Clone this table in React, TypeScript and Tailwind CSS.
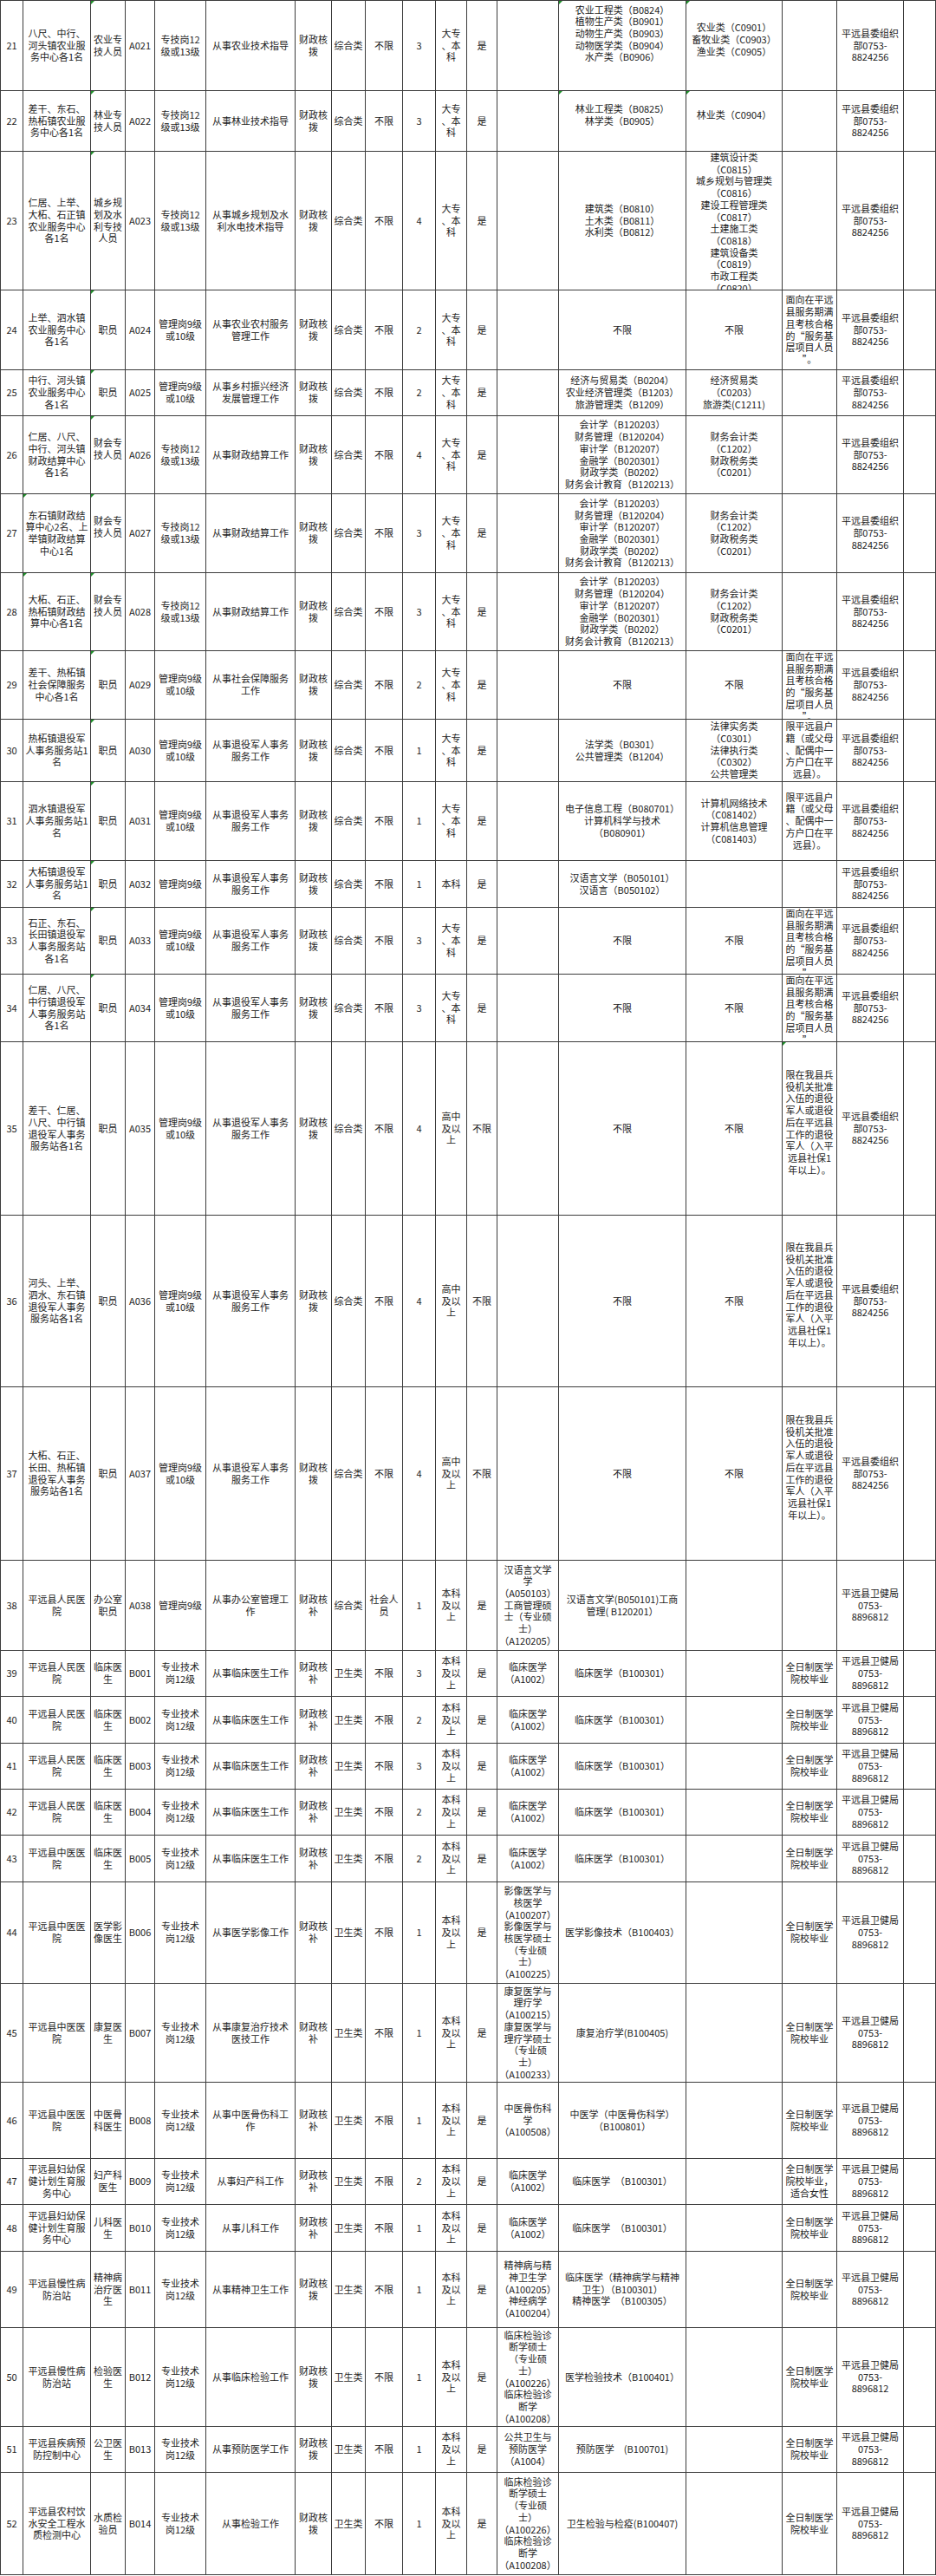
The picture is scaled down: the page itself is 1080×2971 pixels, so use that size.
import React from "react";

const COLS =
  "grid grid-cols-[26px_78px_40px_34px_59px_103px_42px_39px_43px_38px_36px_35px_71px_147px_111px_63px_77px_37px]";

const ORG = "平远县委组织|部0753-|8824256";
const HEALTH = "平远县卫健局|0753-|8896812";
const DZBK = "大专|、本|科";
const BKYS = "本科|及以|上";
const GZYS = "高中|及以|上";
const FUWU = "面向在平远|县服务期满|且考核合格|的“服务基|层项目人员|”。";
const HUJI = "限平远县户|籍（或父母|、配偶中一|方户口在平|远县）。";
const TUIYI =
  "限在我县兵|役机关批准|入伍的退役|军人或退役|后在平远县|工作的退役|军人（入平|远县社保1|年以上）。|";
const CAIKJ =
  "会计学（B120203）|财务管理（B120204）|审计学（B120207）|金融学（B020301）|财政学类（B0202）|财务会计教育（B120213）";
const CAIZK = "财务会计类|（C1202）|财政税务类|（C0201）";
const GL = "管理岗9级|或10级";
const ZJ = "专技岗12|级或13级";
const ZY = "专业技术|岗12级";
const BA = "财政核|拨";
const BU = "财政核|补";
const QRZ = "全日制医学|院校毕业";
const LC = "临床医学|（A1002）";
const TY = "从事退役军人事务|服务工作";
const JYZX = "临床检验诊|断学硕士|（专业硕|士）|（A100226）|临床检验诊|断学|（A100208）";

type Row = { h: string; c: string[]; m?: number[] };

const rows: Row[] = [
  { h: "h-[104px]", m: [2, 13, 14], c: ["21", "八尺、中行、|河头镇农业服|务中心各1名", "农业专|技人员", "A021", ZJ, "从事农业技术指导", BA, "综合类", "不限", "3", DZBK, "是", "", "农业工程类（B0824）|植物生产类（B0901）|动物生产类（B0903）|动物医学类（B0904）|水产类（B0906）||", "农业类（C0901）|畜牧业类（C0903）|渔业类（C0905）|", "", ORG, ""] },
  { h: "h-[70px]", m: [2, 13, 14], c: ["22", "差干、东石、|热柘镇农业服|务中心各1名", "林业专|技人员", "A022", ZJ, "从事林业技术指导", BA, "综合类", "不限", "3", DZBK, "是", "", "林业工程类（B0825）|林学类（B0905）|", "林业类（C0904）|", "", ORG, ""] },
  { h: "h-[160px]", m: [2], c: ["23", "仁居、上举、|大柘、石正镇|农业服务中心|各1名", "城乡规|划及水|利专技|人员", "A023", ZJ, "从事城乡规划及水|利水电技术指导", BA, "综合类", "不限", "4", DZBK, "是", "", "建筑类（B0810）|土木类（B0811）|水利类（B0812）", "建筑设计类|（C0815）|城乡规划与管理类|（C0816）|建设工程管理类|（C0817）|土建施工类|（C0818）|建筑设备类|（C0819）|市政工程类|（C0820）", "", ORG, ""] },
  { h: "h-[92px]", m: [2], c: ["24", "上举、泗水镇|农业服务中心|各1名", "职员", "A024", GL, "从事农业农村服务|管理工作", BA, "综合类", "不限", "2", DZBK, "是", "", "不限", "不限", FUWU, ORG, ""] },
  { h: "h-[53px]", m: [2], c: ["25", "中行、河头镇|农业服务中心|各1名", "职员", "A025", GL, "从事乡村振兴经济|发展管理工作", BA, "综合类", "不限", "2", DZBK, "是", "", "经济与贸易类（B0204）|农业经济管理类（B1203）|旅游管理类（B1209）", "经济贸易类|（C0203）|旅游类(C1211)", "", ORG, ""] },
  { h: "h-[90px]", m: [2], c: ["26", "仁居、八尺、|中行、河头镇|财政结算中心|各1名", "财会专|技人员|", "A026", ZJ, "从事财政结算工作", BA, "综合类", "不限", "4", DZBK, "是", "", CAIKJ, CAIZK, "", ORG, ""] },
  { h: "h-[91px]", m: [1, 2], c: ["27", "东石镇财政结|算中心2名、上|举镇财政结算|中心1名", "财会专|技人员|", "A027", ZJ, "从事财政结算工作", BA, "综合类", "不限", "3", DZBK, "是", "", CAIKJ, CAIZK, "", ORG, ""] },
  { h: "h-[90px]", m: [1, 2], c: ["28", "大柘、石正、|热柘镇财政结|算中心各1名", "财会专|技人员|", "A028", ZJ, "从事财政结算工作", BA, "综合类", "不限", "3", DZBK, "是", "", CAIKJ, CAIZK, "", ORG, ""] },
  { h: "h-[79px]", m: [2], c: ["29", "差干、热柘镇|社会保障服务|中心各1名", "职员", "A029", GL, "从事社会保障服务|工作", BA, "综合类", "不限", "2", DZBK, "是", "", "不限", "不限", FUWU, ORG, ""] },
  { h: "h-[72px]", m: [2], c: ["30", "热柘镇退役军|人事务服务站1|名", "职员", "A030", GL, TY, BA, "综合类", "不限", "1", DZBK, "是", "", "法学类（B0301）|公共管理类（B1204）", "法律实务类|（C0301）|法律执行类|（C0302）|公共管理类", HUJI, ORG, ""] },
  { h: "h-[91px]", m: [2], c: ["31", "泗水镇退役军|人事务服务站1|名", "职员", "A031", GL, TY, BA, "综合类", "不限", "1", DZBK, "是", "", "电子信息工程（B080701）|计算机科学与技术|（B080901）", "计算机网络技术|（C081402）|计算机信息管理|（C081403）", HUJI, ORG, ""] },
  { h: "h-[54px]", m: [2], c: ["32", "大柘镇退役军|人事务服务站1|名", "职员", "A032", "管理岗9级", TY, BA, "综合类", "不限", "1", "本科", "是", "", "汉语言文学（B050101）|汉语言（B050102）", "", "", ORG, ""] },
  { h: "h-[77px]", m: [2], c: ["33", "石正、东石、|长田镇退役军|人事务服务站|各1名", "职员", "A033", GL, TY, BA, "综合类", "不限", "3", DZBK, "是", "", "不限", "不限", FUWU, ORG, ""] },
  { h: "h-[78px]", m: [2], c: ["34", "仁居、八尺、|中行镇退役军|人事务服务站|各1名", "职员", "A034", GL, TY, BA, "综合类", "不限", "3", DZBK, "是", "", "不限", "不限", FUWU, ORG, ""] },
  { h: "h-[200px]", m: [15], c: ["35", "差干、仁居、|八尺、中行镇|退役军人事务|服务站各1名", "职员", "A035", GL, TY, BA, "综合类", "不限", "4", GZYS, "不限", "", "不限", "不限", TUIYI, ORG, ""] },
  { h: "h-[198px]", c: ["36", "河头、上举、|泗水、东石镇|退役军人事务|服务站各1名", "职员", "A036", GL, TY, BA, "综合类", "不限", "4", GZYS, "不限", "", "不限", "不限", TUIYI, ORG, ""] },
  { h: "h-[200px]", c: ["37", "大柘、石正、|长田、热柘镇|退役军人事务|服务站各1名", "职员", "A037", GL, TY, BA, "综合类", "不限", "4", GZYS, "不限", "", "不限", "不限", TUIYI, ORG, ""] },
  { h: "h-[104px]", c: ["38", "平远县人民医|院", "办公室|职员", "A038", "管理岗9级", "从事办公室管理工|作", BU, "综合类", "社会人|员", "1", BKYS, "是", "汉语言文学|学|（A050103）|工商管理硕|士（专业硕|士）|（A120205）", "汉语言文学(B050101)工商|管理( B120201）", "", "", HEALTH, ""] },
  { h: "h-[53px]", c: ["39", "平远县人民医|院", "临床医|生", "B001", ZY, "从事临床医生工作", BU, "卫生类", "不限", "3", BKYS, "是", LC, "临床医学（B100301）", "", QRZ, HEALTH, ""] },
  { h: "h-[54px]", c: ["40", "平远县人民医|院", "临床医|生", "B002", ZY, "从事临床医生工作", BU, "卫生类", "不限", "2", BKYS, "是", LC, "临床医学（B100301）", "", QRZ, HEALTH, ""] },
  { h: "h-[53px]", c: ["41", "平远县人民医|院", "临床医|生", "B003", ZY, "从事临床医生工作", BU, "卫生类", "不限", "3", BKYS, "是", LC, "临床医学（B100301）", "", QRZ, HEALTH, ""] },
  { h: "h-[53px]", c: ["42", "平远县人民医|院", "临床医|生", "B004", ZY, "从事临床医生工作", BU, "卫生类", "不限", "2", BKYS, "是", LC, "临床医学（B100301）", "", QRZ, HEALTH, ""] },
  { h: "h-[54px]", c: ["43", "平远县中医医|院", "临床医|生", "B005", ZY, "从事临床医生工作", BU, "卫生类", "不限", "2", BKYS, "是", LC, "临床医学（B100301）", "", QRZ, HEALTH, ""] },
  { h: "h-[117px]", c: ["44", "平远县中医医|院", "医学影|像医生", "B006", ZY, "从事医学影像工作", BU, "卫生类", "不限", "1", BKYS, "是", "影像医学与|核医学|（A100207）|影像医学与|核医学硕士|（专业硕|士）|（A100225）", "医学影像技术（B100403）", "", QRZ, HEALTH, ""] },
  { h: "h-[114px]", c: ["45", "平远县中医医|院", "康复医|生", "B007", ZY, "从事康复治疗技术|医技工作", BU, "卫生类", "不限", "1", BKYS, "是", "康复医学与|理疗学|（A100215）|康复医学与|理疗学硕士|（专业硕|士）|（A100233）", "康复治疗学(B100405)", "", QRZ, HEALTH, ""] },
  { h: "h-[88px]", c: ["46", "平远县中医医|院", "中医骨|科医生", "B008", ZY, "从事中医骨伤科工|作", BU, "卫生类", "不限", "1", BKYS, "是", "中医骨伤科|学|（A100508）", "中医学（中医骨伤科学）|（B100801）", "", QRZ, HEALTH, ""] },
  { h: "h-[53px]", c: ["47", "平远县妇幼保|健计划生育服|务中心", "妇产科|医生", "B009", ZY, "从事妇产科工作", BU, "卫生类", "不限", "2", BKYS, "是", LC, "临床医学　（B100301）", "", "全日制医学|院校毕业，|适合女性", HEALTH, ""] },
  { h: "h-[54px]", c: ["48", "平远县妇幼保|健计划生育服|务中心", "儿科医|生", "B010", ZY, "从事儿科工作", BU, "卫生类", "不限", "1", BKYS, "是", LC, "临床医学　（B100301）", "", QRZ, HEALTH, ""] },
  { h: "h-[88px]", c: ["49", "平远县慢性病|防治站", "精神病|治疗医|生", "B011", ZY, "从事精神卫生工作", BA, "卫生类", "不限", "1", BKYS, "是", "精神病与精|神卫生学|（A100205）|神经病学|（A100204）", "临床医学（精神病学与精神|卫生）（B100301）|精神医学　（B100305）", "", QRZ, HEALTH, ""] },
  { h: "h-[114px]", c: ["50", "平远县慢性病|防治站", "检验医|生", "B012", ZY, "从事临床检验工作", BA, "卫生类", "不限", "1", BKYS, "是", JYZX, "医学检验技术（B100401）", "", QRZ, HEALTH, ""] },
  { h: "h-[53px]", c: ["51", "平远县疾病预|防控制中心", "公卫医|生", "B013", ZY, "从事预防医学工作", BA, "卫生类", "不限", "1", BKYS, "是", "公共卫生与|预防医学|（A1004）", "预防医学　(B100701)", "", QRZ, HEALTH, ""] },
  { h: "h-[118px]", c: ["52", "平远县农村饮|水安全工程水|质检测中心", "水质检|验员", "B014", ZY, "从事检验工作", BA, "卫生类", "不限", "1", BKYS, "是", JYZX, "卫生检验与检疫(B100407)", "", QRZ, HEALTH, ""] },
];

function Cell({ text, mark }: { text: string; mark?: boolean }) {
  const lines = text === "" ? [] : text.split("|");
  return (
    <div className="relative flex flex-col overflow-hidden border-r border-b border-[#3c3c3c] px-px">
      {mark && (
        <div className="absolute left-0 top-0 h-0 w-0 border-t-[4px] border-r-[4px] border-t-[#1f8f2a] border-r-transparent" />
      )}
      <div className="my-auto">
        {lines.map((l, i) => (
          <div key={i} className="whitespace-nowrap">
            {l === "" ? "\u00a0" : l}
          </div>
        ))}
      </div>
    </div>
  );
}

export default function App() {
  return (
    <div className="min-h-[2971px] w-[1080px] bg-white">
      <div className="w-[1080px] border-l border-t border-[#3c3c3c] bg-white text-center font-['Noto_Sans_CJK_SC','Noto_Sans',sans-serif] text-[11px] leading-[13.7px] text-[#222]">
        {rows.map((r, ri) => (
          <div key={ri} className={`${COLS} ${r.h}`}>
            {r.c.map((t, ci) => (
              <Cell key={ci} text={t} mark={r.m ? r.m.includes(ci) : false} />
            ))}
          </div>
        ))}
      </div>
    </div>
  );
}
